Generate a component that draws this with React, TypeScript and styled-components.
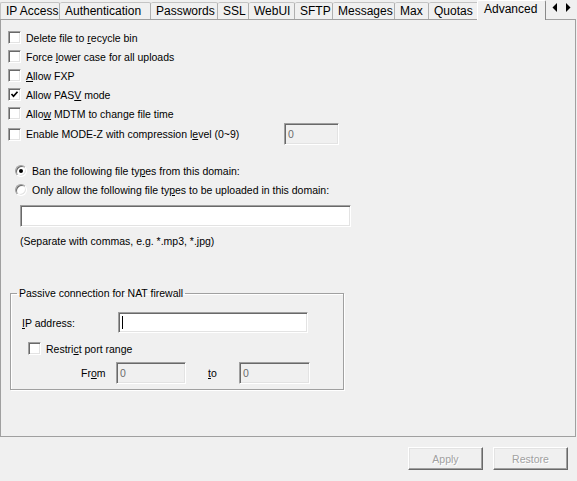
import React from "react";
import styled, { createGlobalStyle } from "styled-components";

const Global = createGlobalStyle`
  html, body { margin: 0; padding: 0; background: #f0f0f0; }
  body { font-family: "Liberation Sans", Arial, sans-serif; font-size: 10.5px; color: #000; }
  #root { width: 577px; height: 481px; overflow: hidden; }
  u { text-decoration: underline; text-underline-offset: 1px; }
`;

const Window = styled.div`
  width: 577px;
  height: 481px;
  display: flex;
  flex-direction: column;
  background: #f0f0f0;
`;

const TabStrip = styled.div`
  display: flex;
  align-items: flex-end;
  height: 20px;
  position: relative;
  z-index: 1;
`;

const Tab = styled.div<{ $w: number; $active?: boolean; $first?: boolean }>`
  box-sizing: border-box;
  flex: none;
  width: ${(p) => p.$w}px;
  height: ${(p) => (p.$active ? 20 : 17)}px;
  margin-bottom: ${(p) => (p.$active ? 0 : 1)}px;
  margin-left: ${(p) => (p.$active ? -3 : 0)}px;
  border-top: 1px solid ${(p) => (p.$active ? "#ffffff" : "#c4c4c4")};
  border-right: 1px solid ${(p) => (p.$active ? "#8a8a8a" : "#b0b0b0")};
  border-left: ${(p) => (p.$first || p.$active ? "1px solid " + (p.$active ? "#ffffff" : "#c4c4c4") : "none")};
  border-radius: 2px 2px 0 0;
  background: #f0f0f0;
  font-size: 12px;
  line-height: 15px;
  padding: ${(p) => (p.$active ? "0 0 2px 6px" : "0 0 0 5px")};
  white-space: nowrap;
  overflow: hidden;
  display: flex;
  align-items: center;
  position: relative;
  z-index: ${(p) => (p.$active ? 2 : 0)};
`;

const ArrowBox = styled.div`
  flex: none;
  width: 31px;
  height: 17px;
  margin-bottom: 2px;
  display: flex;
  align-items: flex-start;
  padding-top: 2px;
  box-sizing: border-box;
  gap: 9px;
  padding-left: 6px;
`;

const Pane = styled.div`
  box-sizing: border-box;
  width: 576px;
  height: 418px;
  margin-top: -1px;
  border: 1px solid #a0a0a0;
  background: #f0f0f0;
  padding: 8px 0 0 7px;
  display: flex;
  flex-direction: column;
  align-items: flex-start;
`;

const CheckRow = styled.div<{ $h?: number; $indent?: number; $top?: number }>`
  display: flex;
  align-items: center;
  gap: 5px;
  height: ${(p) => p.$h ?? 19}px;
  margin-left: ${(p) => p.$indent ?? 0}px;
  margin-top: ${(p) => p.$top ?? 0}px;
`;

const Box = styled.span`
  box-sizing: border-box;
  flex: none;
  width: 13px;
  height: 13px;
  background: #fff;
  border: 1px solid;
  border-color: #a0a0a0 #ffffff #ffffff #a0a0a0;
  box-shadow: inset 1px 1px 0 #696969, inset -1px -1px 0 #e3e3e3;
  display: flex;
  align-items: center;
  justify-content: center;
`;

const Label = styled.span`
  white-space: nowrap;
  line-height: 14px;
`;

const ZRow = styled.div`
  display: grid;
  grid-template-columns: 276px 55px;
  align-items: center;
  height: 21px;
`;

const Field = styled.div<{ $w: number; $h?: number; $disabled?: boolean }>`
  box-sizing: border-box;
  width: ${(p) => p.$w}px;
  height: ${(p) => p.$h ?? 22}px;
  background: ${(p) => (p.$disabled ? "#f0f0f0" : "#ffffff")};
  color: ${(p) => (p.$disabled ? "#6d6d6d" : "#000")};
  border: 1px solid;
  border-color: #a0a0a0 #ffffff #ffffff #a0a0a0;
  box-shadow: inset 1px 1px 0 #696969, inset -1px -1px 0 #e3e3e3;
  padding: 0 3px;
  display: flex;
  align-items: center;
  line-height: 14px;
`;

const Caret = styled.span`
  display: block;
  width: 1px;
  height: 13px;
  background: #000;
`;

const RadioGroup = styled.div`
  margin-top: 17px;
  margin-left: 7px;
  display: flex;
  flex-direction: column;
`;

const RadioRow = styled.div`
  display: flex;
  align-items: center;
  gap: 5px;
  height: 19px;
`;

const Radio = styled.span<{ $on?: boolean }>`
  box-sizing: border-box;
  flex: none;
  width: 12px;
  height: 12px;
  border-radius: 50%;
  background: #fff;
  border: 1px solid;
  border-color: #a0a0a0 #ffffff #ffffff #a0a0a0;
  box-shadow: inset 1px 1px 0 #696969, inset -1px -1px 0 #e3e3e3;
  display: flex;
  align-items: center;
  justify-content: center;
  &::after {
    content: "";
    width: 4px;
    height: 4px;
    border-radius: 50%;
    background: ${(p) => (p.$on ? "#000" : "transparent")};
  }
`;

const Indented = styled.div<{ $top: number }>`
  margin-left: 12px;
  margin-top: ${(p) => p.$top}px;
  line-height: 14px;
`;

const GroupBox = styled.fieldset`
  box-sizing: border-box;
  width: 334px;
  margin: 38px 0 0 2px;
  padding: 0;
  min-width: 0;
  border: 1px solid #a0a0a0;
  box-shadow: inset 1px 1px 0 #ffffff, 1px 1px 0 #ffffff;
`;

const Legend = styled.legend`
  margin-left: 6px;
  padding: 0 2px;
  line-height: 14px;
  font-size: 10.5px;
`;

const GroupBody = styled.div`
  padding: 12px 0 5px 11px;
  display: flex;
  flex-direction: column;
`;

const FormRow = styled.div<{ $top?: number }>`
  display: flex;
  align-items: center;
  margin-top: ${(p) => p.$top ?? 0}px;
`;

const RowLabel = styled.span<{ $w: number; $left?: number }>`
  flex: none;
  width: ${(p) => p.$w}px;
  margin-left: ${(p) => p.$left ?? 0}px;
  line-height: 14px;
  white-space: nowrap;
`;

const Footer = styled.div`
  display: flex;
  justify-content: flex-end;
  gap: 10px;
  padding: 10px 9px 0 0;
`;

const Button = styled.div`
  box-sizing: border-box;
  width: 75px;
  height: 23px;
  background: #f0f0f0;
  border: 1px solid;
  border-color: #ffffff #696969 #696969 #ffffff;
  box-shadow: inset -1px -1px 0 #a0a0a0, inset 1px 1px 0 #e3e3e3;
  color: #a0a0a0;
  text-shadow: 1px 1px 0 #ffffff;
  display: flex;
  align-items: center;
  justify-content: center;
  line-height: 14px;
`;

const Check = () => (
  <svg width="9" height="9" viewBox="0 0 9 9">
    <polyline points="1.5,4 3.5,6.2 7.5,1.8" fill="none" stroke="#000" strokeWidth="1.7" />
  </svg>
);

const ArrowLeft = () => (
  <svg width="5" height="9" viewBox="0 0 5 9">
    <polygon points="5,0 5,9 0.5,4.5" fill="#000" />
  </svg>
);
const ArrowRight = () => (
  <svg width="5" height="9" viewBox="0 0 5 9">
    <polygon points="0,0 0,9 4.5,4.5" fill="#000" />
  </svg>
);

const tabs: { label: string; w: number }[] = [
  { label: "IP Access", w: 60 },
  { label: "Authentication", w: 91 },
  { label: "Passwords", w: 67 },
  { label: "SSL", w: 31 },
  { label: "WebUI", w: 46 },
  { label: "SFTP", w: 38 },
  { label: "Messages", w: 62 },
  { label: "Max", w: 34 },
  { label: "Quotas", w: 51 },
];

const CheckItem = ({ checked, children }: { checked?: boolean; children: React.ReactNode }) => (
  <CheckRow>
    <Box>{checked && <Check />}</Box>
    <Label>{children}</Label>
  </CheckRow>
);

export default function App() {
  return (
    <Window>
      <Global />
      <TabStrip>
        {tabs.map((t, i) => (
          <Tab key={t.label} $w={t.w} $first={i === 0}>
            {t.label}
          </Tab>
        ))}
        <Tab $w={69} $active>
          Advanced
        </Tab>
        <ArrowBox>
          <ArrowLeft />
          <ArrowRight />
        </ArrowBox>
      </TabStrip>
      <Pane>
        <CheckItem>
          Delete file to <u>r</u>ecycle bin
        </CheckItem>
        <CheckItem>
          Force <u>l</u>ower case for all uploads
        </CheckItem>
        <CheckItem>
          <u>A</u>llow FXP
        </CheckItem>
        <CheckItem checked>
          Allow PAS<u>V</u> mode
        </CheckItem>
        <CheckItem>
          Allo<u>w</u> MDTM to change file time
        </CheckItem>
        <ZRow>
          <CheckRow $h={21}>
            <Box />
            <Label>
              Enable MODE-Z with compression l<u>e</u>vel (0~9)
            </Label>
          </CheckRow>
          <Field $w={55} $disabled>
            0
          </Field>
        </ZRow>
        <RadioGroup>
          <RadioRow>
            <Radio $on />
            <Label>
              Ban the following file ty<u>p</u>es from this domain:
            </Label>
          </RadioRow>
          <RadioRow>
            <Radio />
            <Label>
              Only allow the following file ty<u>p</u>es to be uploaded in this domain:
            </Label>
          </RadioRow>
        </RadioGroup>
        <Indented $top={6}>
          <Field $w={331} />
        </Indented>
        <Indented $top={7}>(Separate with commas, e.g. *.mp3, *.jpg)</Indented>
        <GroupBox>
          <Legend>Passive connection for NAT firewall</Legend>
          <GroupBody>
            <FormRow>
              <RowLabel $w={96}>
                <u>I</u>P address:
              </RowLabel>
              <Field $w={190} $h={21}>
                <Caret />
              </Field>
            </FormRow>
            <CheckRow $indent={6} $top={6}>
              <Box />
              <Label>
                Restri<u>c</u>t port range
              </Label>
            </CheckRow>
            <FormRow $top={4}>
              <RowLabel $w={35} $left={59}>
                Fr<u>o</u>m
              </RowLabel>
              <Field $w={70} $disabled>
                0
              </Field>
              <RowLabel $w={31} $left={22}>
                <u>t</u>o
              </RowLabel>
              <Field $w={71} $disabled>
                0
              </Field>
            </FormRow>
          </GroupBody>
        </GroupBox>
      </Pane>
      <Footer>
        <Button>Apply</Button>
        <Button>Restore</Button>
      </Footer>
    </Window>
  );
}
